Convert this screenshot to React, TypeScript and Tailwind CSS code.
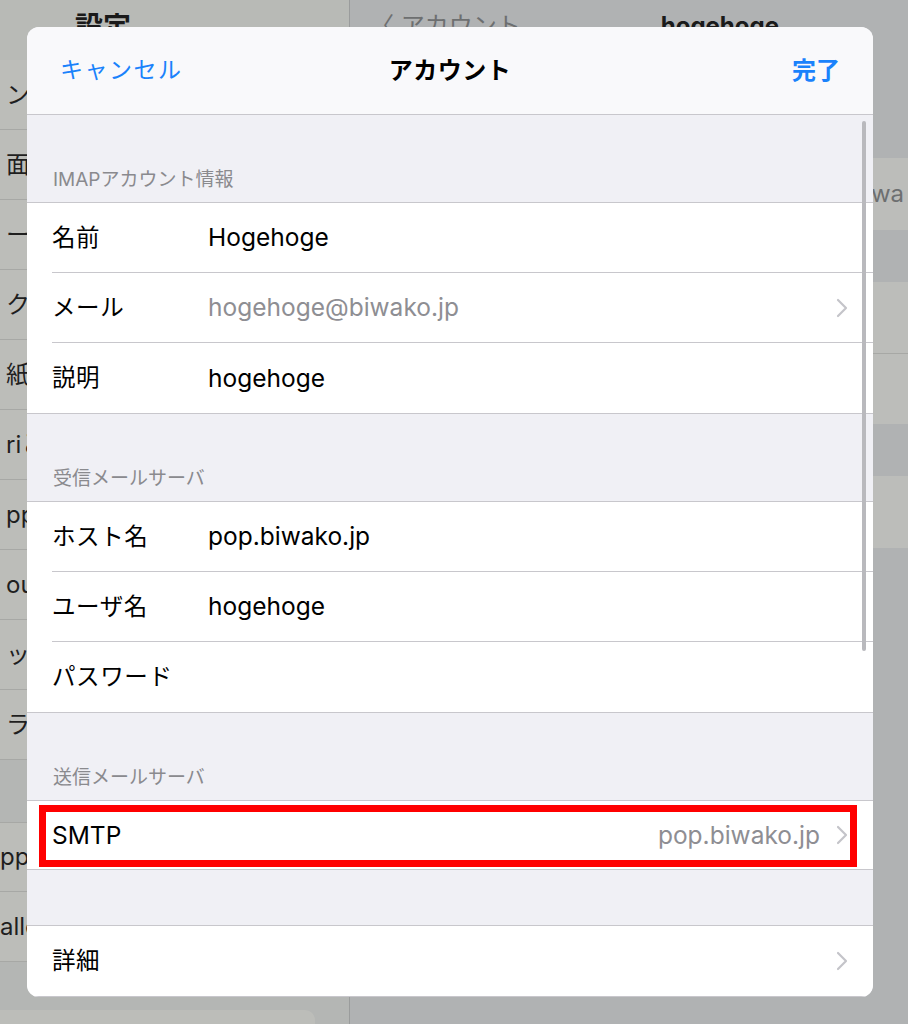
import React from "react";

const jp = "font-['Inter','Noto_Sans_CJK_JP',sans-serif]";

type Row = { label: string; value?: string; muted?: boolean; chevron?: boolean };

const Chevron = () => (
  <svg width="12" height="20" viewBox="0 0 12 20" fill="none" className="shrink-0">
    <path d="M2 2l8 8-8 8" stroke="#c4c4c9" strokeWidth="2.2" strokeLinecap="round" strokeLinejoin="round" />
  </svg>
);

const Group = ({ rows }: { rows: Row[] }) => (
  <div className="bg-white border-y border-[#c8c7cc]">
    {rows.map((r, i) => (
      <div key={r.label} className="pl-[25px]">
        <div
          className={
            "h-[70px] flex items-center pr-[25px] " + (i < rows.length - 1 ? "border-b border-[#c8c7cc]" : "")
          }
        >
          <span className="w-[156px] shrink-0 text-[23.5px] tracking-[0.6px] text-black">{r.label}</span>
          <span className={"flex-1 text-[24.5px] " + (r.muted ? "text-[#8e8e93]" : "text-black")}>{r.value}</span>
          {r.chevron && <Chevron />}
        </div>
      </div>
    ))}
  </div>
);

const SectionTitle = ({ text }: { text: string }) => (
  <div className="h-[87px] flex items-end pl-[26px] pb-[8px] text-[19px] text-[#8a8a8e]">{text}</div>
);

const sideRows = ["ン", "面表", "ー", "ク", "紙", "riと", "ppl", "ouc", "ッ", "ラ"];

export default function App() {
  return (
    <div className={"relative w-[908px] h-[1024px] overflow-hidden bg-[#b0b2b3] " + jp}>
      {/* dimmed settings screen behind */}
      <div className="flex h-full">
        <div className="w-[350px] border-r border-[#9a9c9c] bg-[#b4b6b4] flex flex-col">
          <div className="h-[60px] bg-[#b8bab6] pl-[75px] pt-[6px] text-[28px] font-bold text-[#1a1a1a]">設定</div>
          {sideRows.map((t) => (
            <div key={t} className="h-[70px] bg-[#bcbdb9] border-b border-[#a7a8a5] flex items-center text-[24px] text-[#1f1f1f]">
              <span className="pl-[6px]">{t}</span>
            </div>
          ))}
          <div className="h-[62px]" />
          <div className="h-[70px] bg-[#bcbdb9] border-y border-[#a7a8a5] flex items-center text-[24px] text-[#1f1f1f]">
            <span>pp</span>
          </div>
          <div className="h-[70px] bg-[#bcbdb9] border-b border-[#a7a8a5] flex items-center text-[24px] text-[#1f1f1f]">
            <span>allo</span>
          </div>
          <div className="flex-1" />
          <div className="h-[14px] w-[315px] bg-[#bcbdb9] rounded-tr-[10px]" />
        </div>
        <div className="flex-1 flex flex-col">
          <div className="h-[60px] flex items-start pt-[8px] text-[24px] text-[#6d6f70]">
            <span className="pl-[20px]">〈 アカウント</span>
            <span className="ml-[140px] font-bold text-[#1a1a1a]">hogehoge</span>
          </div>
          <div className="h-[98px]" />
          <div className="h-[72px] bg-[#bcbdba] flex items-center justify-end pr-[4px] text-[24px] text-[#6d6f70]">
            <span>hogehoge@biwa</span>
          </div>
          <div className="h-[52px]" />
          <div className="h-[72px] bg-[#bcbdba] border-b border-[#a7a8a5]" />
          <div className="h-[70px] bg-[#bcbdba]" />
          <div className="h-[52px]" />
          <div className="h-[72px] bg-[#bcbdba]" />
        </div>
      </div>

      {/* modal sheet */}
      <div className="absolute left-[27px] top-[27px] w-[846px] h-[970px] rounded-[12px] overflow-hidden flex flex-col bg-[#f0f0f5]">
        <div className="h-[88px] shrink-0 bg-[#f9f9fb] border-b border-[#c8c7cc] grid grid-cols-3 items-center px-[33px]">
          <span className="text-[23px] text-[#1a82fb] tracking-[1.5px]">キャンセル</span>
          <span className="text-center text-[24px] font-bold text-black tracking-[0.5px]">アカウント</span>
          <span className="text-right text-[24px] font-bold text-[#1a82fb]">完了</span>
        </div>
        <div className="relative flex-1">
          <SectionTitle text="IMAPアカウント情報" />
          <Group
            rows={[
              { label: "名前", value: "Hogehoge" },
              { label: "メール", value: "hogehoge@biwako.jp", muted: true, chevron: true },
              { label: "説明", value: "hogehoge" },
            ]}
          />
          <SectionTitle text="受信メールサーバ" />
          <Group
            rows={[
              { label: "ホスト名", value: "pop.biwako.jp" },
              { label: "ユーザ名", value: "hogehoge" },
              { label: "パスワード", value: "" },
            ]}
          />
          <SectionTitle text="送信メールサーバ" />
          <div className="bg-white border-y border-[#c8c7cc] pl-[25px] pr-[25px]">
            <div className="relative h-[68px] flex items-center">
              <span className="flex-1 text-[24.5px] text-black">SMTP</span>
              <span className="text-[24.5px] text-[#8e8e93] mr-[16px]">pop.biwako.jp</span>
              <Chevron />
              <div className="absolute left-[-13px] right-[-9px] top-[4px] bottom-[2px] border-[7px] border-[#ff0000]" />
            </div>
          </div>
          <div className="h-[55px]" />
          <Group rows={[{ label: "詳細", value: "", chevron: true }]} />
          <div className="absolute right-[7px] top-[6px] w-[4px] h-[530px] rounded-full bg-[#b9b9bd]" />
        </div>
      </div>
    </div>
  );
}
